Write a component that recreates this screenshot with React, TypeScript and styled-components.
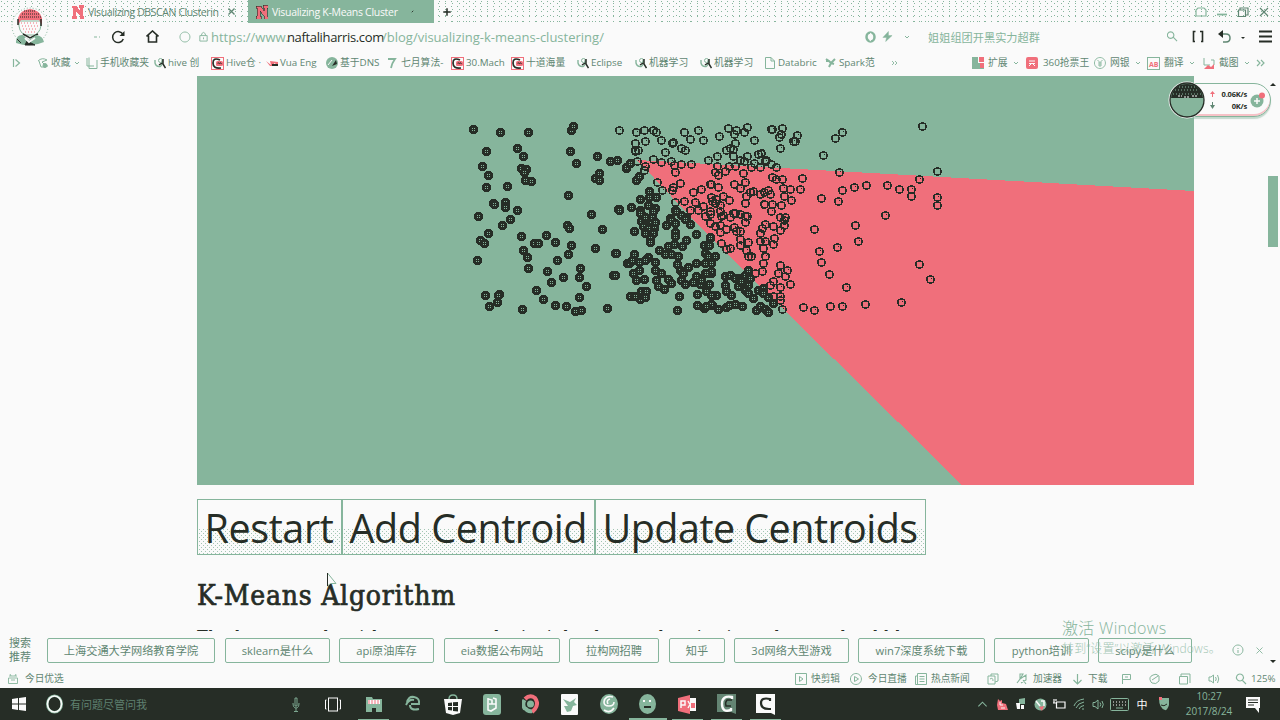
import React from 'react';
import styled, { createGlobalStyle, css } from 'styled-components';

const paper = '#fafafa';
const green = '#86b59c';
const red = '#f06f7b';
const ink = '#262d26';
const mid = '#5f8672';

const ui = `"Open Sans", "Noto Sans CJK SC", sans-serif`;

const Global = createGlobalStyle`
  * { box-sizing: border-box; }
  html, body { margin: 0; background: ${paper}; overflow: hidden; }
  body { font-family: ${ui}; color: ${ink}; }
  svg { display: block; flex: none; }
`;

const stipple = css`
  background-image:
    linear-gradient(${green}, ${green}), radial-gradient(circle at 1.5px 1.5px, ${green} 0.7px, transparent 0.8px),
    radial-gradient(circle at 4.5px 3.5px, ${green} 0.7px, transparent 0.8px);
  background-size: 0 0, 6px 5px, 7px 6px;
`;

const Screen = styled.div`
  position: relative;
  width: 1280px;
  height: 720px;
  display: flex;
  flex-direction: column;
  overflow: hidden;
  background: ${paper};
`;

const TabBar = styled.div`
  height: 23px;
  flex: none;
  display: flex;
  padding-left: 64px;
  ${stipple}
`;

const Tab = styled.div<{ $active?: boolean; $width: number }>`
  width: ${p => p.$width}px;
  height: 23px;
  display: flex;
  align-items: center;
  padding: 0 8px;
  background: ${p => (p.$active ? green : 'transparent')};
  color: ${p => (p.$active ? paper : mid)};
  font-size: 10.5px;
`;

const TabTitle = styled.span<{ $spacing: number; $width: number }>`
  margin-left: 4px;
  width: ${p => p.$width}px;
  white-space: nowrap;
  letter-spacing: ${p => p.$spacing}px;
`;

const TabTools = styled.div`
  display: flex;
  align-items: center;
  margin-left: auto;
  gap: 9px;
  padding-right: 10px;
`;

const NewTab = styled.div`
  display: flex;
  align-items: center;
  padding-left: 8px;
`;

const AddressBar = styled.div`
  height: 27px;
  flex: none;
  display: flex;
  align-items: center;
`;

const Slot = styled.div<{ $width: number; $align?: string }>`
  width: ${p => p.$width}px;
  flex: none;
  display: flex;
  align-items: center;
  justify-content: ${p => p.$align || 'center'};
`;

const UrlPart = styled.span<{ $width: number; $dark?: boolean; $spacing?: number }>`
  width: ${p => p.$width}px;
  flex: none;
  white-space: nowrap;
  font-size: 13px;
  line-height: 22px;
  letter-spacing: ${p => p.$spacing || 0}px;
  color: ${p => (p.$dark ? ink : green)};
`;

const Query = styled.span`
  width: 237px;
  font-size: 11.2px;
  color: ${green};
`;

const BookmarkBar = styled.div`
  height: 26px;
  flex: none;
  display: flex;
  align-items: center;
  padding-left: 10px;
`;

const Bookmark = styled.div<{ $width: number; $gap?: number }>`
  width: ${p => p.$width}px;
  flex: none;
  display: flex;
  align-items: center;
  gap: ${p => p.$gap ?? 2}px;
  font-size: 9.8px;
  line-height: 14px;
  color: ${mid};
  white-space: nowrap;
`;

const Page = styled.main`
  height: 555px;
  flex: none;
  display: flex;
  justify-content: space-between;
  padding-left: 197px;
  overflow: hidden;
`;

const Article = styled.article`
  width: 997px;
`;

const Controls = styled.div`
  display: flex;
  margin-top: 14px;
`;

const ControlButton = styled.button<{ $width: number; $spacing: number }>`
  position: relative;
  width: ${p => p.$width}px;
  height: 56px;
  margin: 0;
  padding: 1px 0 0 6.500px;
  text-align: left;
  border: 1px solid ${green};
  background: ${paper};
  font: 39.500px/54px "Open Sans", sans-serif;
  letter-spacing: ${p => p.$spacing}px;
  white-space: nowrap;
  color: ${ink};
  &::before {
    content: '';
    position: absolute;
    inset: 28px 0 0 0;
    opacity: 0.75;
    background-image: radial-gradient(circle at 1.5px 1.5px, ${green} 0.7px, transparent 0.8px),
      radial-gradient(circle at 3.5px 3.5px, ${green} 0.7px, transparent 0.8px);
    background-size: 4px 4px;
  }
`;

const ButtonLabel = styled.span`
  position: relative;
`;

const Heading = styled.h2`
  margin: 21px 0 0;
  font: 28px/40px "DejaVu Serif Condensed", "DejaVu Serif", serif;
  font-stretch: condensed;
  letter-spacing: 0.75px;
  white-space: nowrap;
  -webkit-text-stroke: 0.7px ${ink};
`;

const Paragraph = styled.p`
  margin: 8px 0 0;
  font: 18px/28px "DejaVu Serif Condensed", "DejaVu Serif", serif;
  font-stretch: condensed;
  letter-spacing: 0.6px;
  white-space: nowrap;
`;

const ScrollTrack = styled.div`
  width: 14px;
  display: flex;
  flex-direction: column;
  align-items: center;
  padding-top: 5px;
`;

const ScrollThumb = styled.div`
  width: 10px;
  height: 71px;
  margin-top: 87px;
  background: ${green};
`;

const Suggest = styled.div`
  height: 38px;
  flex: none;
  display: flex;
  align-items: center;
  padding-left: 9px;
`;

const SuggestTitle = styled.div`
  width: 38px;
  font-size: 11px;
  line-height: 14px;
  color: ${mid};
`;

const Chip = styled.div<{ $width: number; $gap: number }>`
  width: ${p => p.$width}px;
  height: 25px;
  margin-right: ${p => p.$gap}px;
  flex: none;
  border: 1px solid ${green};
  border-radius: 2px;
  text-align: center;
  white-space: nowrap;
  font-size: 11.2px;
  line-height: 23px;
  color: ${mid};
`;

const SuggestTools = styled.div`
  align-self: stretch;
  display: flex;
  align-items: center;
`;

const ScrollEnd = styled.div`
  align-self: flex-end;
  margin-bottom: 3px;
`;

const StatusBar = styled.div`
  height: 19px;
  flex: none;
  display: flex;
  align-items: center;
  font-size: 9.7px;
  line-height: 14px;
  color: ${mid};
  white-space: nowrap;
  padding-left: 7px;
`;

const TaskBar = styled.footer`
  height: 32px;
  flex: none;
  display: flex;
  align-items: stretch;
  background: ${ink};
`;

const TaskSlot = styled.div<{ $width: number; $open?: boolean; $active?: boolean }>`
  width: ${p => p.$width}px;
  flex: none;
  display: flex;
  align-items: center;
  justify-content: center;
  background: linear-gradient(${green}, ${green}) center bottom / ${p => (p.$active ? '38px 2px' : p.$open ? '31px 1px' : '0 0')} no-repeat;
`;

const TaskQuery = styled.div`
  width: 213px;
  align-self: center;
  font-size: 11px;
  color: #5f8070;
`;

const Ime = styled.span`
  font-size: 11px;
  color: ${paper};
`;

const Clock = styled.div`
  width: 68px;
  text-align: center;
  font-size: 10px;
  line-height: 15px;
  color: ${green};
  padding-top: 1px;
  letter-spacing: -0.1px;
`;

const Avatar = styled.div`
  position: absolute;
  left: 11px;
  top: 7px;
`;

const Watermark = styled.div`
  position: absolute;
  left: 1062px;
  top: 618px;
  color: ${green};
  font-weight: 300;
  white-space: nowrap;
  font-size: 16px;
  letter-spacing: 0.3px;
  line-height: 21px;
`;

const WatermarkSmall = styled.div`
  font-size: 12px;
  letter-spacing: 0.2px;
  line-height: 16px;
  margin-top: 2px;
  opacity: 0.75;
`;

const NetWidget = styled.div`
  position: absolute;
  left: 1168px;
  top: 80px;
  display: flex;
  align-items: center;
`;

const NetPill = styled.div`
  width: 83px;
  height: 34px;
  margin-left: -18px;
  padding: 0 5px 0 21px;
  display: flex;
  align-items: center;
  justify-content: space-between;
  border: 1px solid ${green};
  border-radius: 0 17px 17px 0;
  box-shadow: inset 0 -2px 0 ${red}66, 0 2px 1px ${green}77;
  background: ${paper};
`;

const NetBall = styled.div`
  position: relative;
  z-index: 1;
`;

const NetText = styled.div`
  width: 33px;
  padding-right: 2px;
  text-align: right;
  font: bold 7.5px/12px "Open Sans", sans-serif;
  letter-spacing: -0.2px;
`;

const Cursor = styled.div`
  position: absolute;
  left: 326px;
  top: 572px;
`;

type IconProps = { d: string; size?: number; color?: string; fill?: string; w?: number; box?: number };
const Icon = ({ d, size = 12, color = green, fill = 'none', w = 1.2, box = 12 }: IconProps) => (
  <svg width={size} height={size} viewBox={`0 0 ${box} ${box}`} fill={fill} stroke={color} strokeWidth={w}>
    <path d={d} />
  </svg>
);

const Chevron = ({ color = green }) => <Icon d="M2 3 L4 5 L6 3" size={8} box={8} color={color} w={1} />;

const SiteN = () => (
  <svg width="12" height="14" viewBox="0 0 12 14" shapeRendering="crispEdges">
    <path d="M0 1H5L8 6V3H7V0H12V3H11V11H12V14H8V11L4 6V11H5V14H0V11H1V3H0Z" fill={red} />
  </svg>
);

const SiteNOutlined = () => (
  <svg width="12" height="14" viewBox="0 0 12 14" shapeRendering="crispEdges">
    <path d="M0 1H5L8 6V3H7V0H12V3H11V11H12V14H8V11L4 6V11H5V14H0V11H1V3H0Z" fill={red} stroke={ink} strokeWidth=".6" />
  </svg>
);

const Swirl = () => (
  <svg width="12" height="12" viewBox="0 0 12 12" fill="none">
    <path d="M1 3V6Q2 10 6 9.500Q9 8 8 3" stroke={green} strokeWidth="1.4" />
    <circle cx="6.500" cy="3.500" r="2" stroke={green} />
    <path d="M9 2V7L11.500 11M5 8L8 6" stroke={ink} strokeWidth="1.5" />
  </svg>
);

const RedC = () => (
  <svg width="13" height="13" viewBox="0 0 13 13" fill="none">
    <rect x=".5" y=".5" width="12" height="12" stroke={red} />
    <path d="M9 3Q2 0 2 6T10 11" stroke={ink} strokeWidth="1.7" />
    <rect x="5" y="4" width="7" height="5" rx="1.5" fill={red} />
    <path d="M7 7V5.5L9 7V5.5L11 7" stroke={ink} strokeWidth=".7" />
  </svg>
);

const glyphs: Record<string, React.ReactNode> = {
  star: (
    <svg width="12" height="12" viewBox="0 0 12 12" fill="none" stroke={green}>
      <path d="M1 4Q5 0 10 3L5 5L9 9H11M2 4L4 10H8" />
      <circle cx="8" cy="8.500" r="2" fill={green} />
    </svg>
  ),
  phone: <Icon d="M3 .5V11.500H11V3M1 1V9H8" w={1} />,
  swirl: <Swirl />,
  redc: <RedC />,
  vue: (
    <svg width="12" height="12" viewBox="0 0 12 12">
      <path d="M0 4L5 8L4 4L12 5V8L8 6V9H4Z" fill={red} />
      <path d="M6 7H12V9H6Z" fill={ink} />
    </svg>
  ),
  dns: (
    <svg width="12" height="12" viewBox="0 0 12 12">
      <circle cx="6" cy="6" r="6" fill={green} />
      <path d="M6 9L10 3L11 7Z" fill={ink} />
      <path d="M2 8L6 3" stroke={paper} />
    </svg>
  ),
  seven: <Icon d="M1 2H8Q5 6 4 11" w={1.800} />,
  page: <Icon d="M1.500 .5H7L10.500 4V11.500H1.500ZM7 .5V4H10.500" w={1} />,
  spark: <Icon d="M1 2L4 4L6 6L10 2M6 6L4 10M6 6L9 7M1 4L4 4" w={2} />,
};

const bookmarks: [string, string, number][] = [
  ['phone', '手机收藏夹', 68],
  ['swirl', 'hive 创', 57],
  ['redc', 'Hive仓 ·', 55],
  ['vue', 'Vua Eng', 60],
  ['dns', '基于DNS', 61],
  ['seven', '七月算法-', 64],
  ['redc', '30.Mach', 60],
  ['redc', '十道海量', 66],
  ['swirl', 'Eclipse', 58],
  ['swirl', '机器学习', 65],
  ['swirl', '机器学习', 64],
  ['page', 'Databric', 61],
  ['spark', 'Spark范', 65],
];

type Tile = { x: number; y: number; solid?: string; open?: string };

// Sample positions, grouped by tile; offsets inside a tile are in thirds of a pixel.
const tiles: Tile[] = [
  {
    x: 460, y: 110,
    solid: '40,57 120,67 204,67 333,60 341,50 173,115 189,138 78,124 67,168 86,196 80,232 142,230 183,174 198,178 193,188 196,212 213,215 332,125 349,161 413,138 451,155 471,150 499,174 418,190 405,204 419,212 326,257 100,281 104,284 137,278 137,291 171,301 55,319 152,327 128,346 84,370 62,391 74,400 53,450 183,378 223,401 236,400 259,375 287,397 321,347 329,355 394,313 427,358 406,416 333,407 326,432 467,430 475,299 191,421 203,443 204,475 291,451 262,484 273,517 309,501 360,475 357,501 379,530 460,497 503,461 228,542 250,567 285,586 320,589 345,603 363,600 358,563 441,596 188,598 77,555 118,552 115,556 113,577 89,589',
    open: '479,60',
  },
  {
    x: 615, y: 110,
    solid: '7,150 35,173 65,210 72,200 47,160 103,245 124,262 103,262 77,267 12,298 48,293 75,302 100,285 85,320 120,294 112,322 165,325 182,300 200,315 215,322',
    open: '64,68 87,60 115,60 124,68 92,93 61,101 138,91 115,147 152,128 207,66 250,62 225,88 265,90 175,97 173,99 200,115 210,122 140,158 168,155 178,165 182,188 198,162 230,162 195,220 172,240 174,232 90,168 88,180 66,153 128,217 142,240 180,278 209,273 235,247 260,238 290,222 240,278 265,290 250,300 292,275 225,300 270,318 60,124 70,120 62,120',
  },
  {
    x: 705, y: 110,
    open: '42,80 70,54 88,72 95,62 118,68 127,53 148,92 198,57 201,59 233,54 228,72 224,83 225,115 277,75 266,94 90,100 75,115 65,120 85,118 85,138 38,138 128,138 160,132 170,130 105,150 118,155 148,160 185,150 180,155 198,162 215,172 140,172 165,172 38,168 72,170 90,168 60,185 40,195 30,188 115,190 15,222 40,232 120,218 88,224 105,234 203,203 215,207 232,208 285,238 255,237 236,235 238,258 260,272 230,286 203,282 178,282 200,305 225,322 125,258 135,248 145,244 165,254 178,246 190,240 197,252 120,280 18,262 35,268 55,260 72,270 45,285 30,280 45,305 15,305 50,320 90,310 105,312 122,318 75,322 240,322 10,150',
  },
  {
    x: 615, y: 210,
    solid: '12,0 75,10 115,5 80,35 95,30 110,40 122,38 85,50 100,55 118,55 90,70 115,70 105,85 105,97 90,22 57,63 153,47 168,30 180,40 185,5 200,15 212,28 225,42 180,68 180,80 245,73 213,92 203,110 178,103 160,108 133,120 150,132 168,132 190,140 286,85 268,105 5,130 57,132 42,160 52,150 72,158 100,142 90,152 120,158 55,190 72,182 65,212 88,207 120,182 138,190 125,212 130,230 148,238 160,208 168,220 187,162 195,180 205,190 220,172 200,210 212,222 235,218 244,160 245,198 255,222 270,130 280,145 270,160 290,160 270,190 290,190 260,212 282,222 2,197 46,260 80,245 95,245 75,268 90,262 60,260 193,260 188,300 248,252 248,286 268,294 292,285 275,245',
  },
  {
    x: 705, y: 210,
    solid: '17,82 12,105 10,140 32,140 0,160 20,185 5,190 60,198 75,195 90,205 60,225 65,245 78,255 100,230 105,205 120,195 130,182 135,205 110,215 130,225 120,240 130,250 145,265 160,240 175,235 175,250 190,262 205,280 113,288 90,282 65,293 72,285 40,297 20,282 5,290 35,257 18,255 155,300 165,290 180,298 190,308',
    open: '15,12 15,40 30,48 45,45 45,67 65,57 88,52 95,65 105,65 75,22 55,15 85,10 105,12 128,18 122,38 225,22 238,30 238,45 225,60 205,48 180,42 172,55 165,70 165,95 182,95 207,85 205,103 175,115 180,138 175,160 172,185 150,190 130,97 105,88 105,105 48,100 75,115 65,118 125,120 130,140 140,138 225,167 247,180 240,200 220,190 205,215 225,232 255,222 195,225 205,258 225,258 225,272 232,297',
  },
  {
    x: 795, y: 110,
    open: '7,76 2,95 141,66 120,85 86,137 382,49 132,187 22,206 15,238 142,241 178,232 213,226 276,226 314,238 350,238 350,259 374,209 427,185 428,261 427,287 130,275 78,264 271,317 181,345 191,394 57,359 74,425 79,456 126,411 104,492 155,532 374,462 405,509 25,593 58,600 106,590 143,590 210,583 319,577',
  },
];

const place = (t: Tile, list = '') =>
  list.split(' ').filter(Boolean).map(pair => {
    const [x, y] = pair.split(',').map(Number);
    return [Math.floor(t.x + x / 3), Math.floor(t.y + y / 3)];
  });

const Plot = () => (
  <svg width="997" height="409" viewBox="197 76 997 409" shapeRendering="crispEdges">
    <rect x="197" y="76" width="997" height="409" fill={green} />
    <path d="M637 160L1194 191V485H962L705 232Z" fill={red} />
    {tiles.map((t, i) => (
      <g key={i}>
        {place(t, t.solid).map(([x, y], k) => (
          <g key={k}>
            <circle cx={x + 0.5} cy={y + 0.5} r="4.6" fill={ink} />
            <path d={`M${x - 1} ${y - 1}h1v1h-1zM${x + 1} ${y - 1}h1v1h-1zM${x - 1} ${y + 1}h1v1h-1zM${x + 1} ${y + 1}h1v1h-1z`} fill={green} />
          </g>
        ))}
        {place(t, t.open).map(([x, y], k) => (
          <g key={k}>
            <circle cx={x + 0.5} cy={y + 0.5} r="3.600" fill="none" stroke={ink} strokeWidth="1.800" />
            {k % 2 === 0 && <rect x={x + 1} y={y - 1} width="1" height="1" fill={ink} />}
          </g>
        ))}
      </g>
    ))}
  </svg>
);

const chips: [string, number, number][] = [
  ['上海交通大学网络教育学院', 168, 10],
  ['sklearn是什么', 105, 9],
  ['api原油库存', 95, 10],
  ['eia数据公布网站', 116, 9],
  ['拉构网招聘', 90, 10],
  ['知乎', 56, 9],
  ['3d网络大型游戏', 115, 9],
  ['win7深度系统下载', 127, 9],
  ['python培训', 95, 9],
  ['scipy是什么', 94, 40],
];

const Tray = () => (
  <>
    <TaskSlot $width={20}><Icon d="M1.500 8L6 3.500L10.500 8" color={green} size={11} /></TaskSlot>
    <TaskSlot $width={19}>
      <svg width="12" height="13" viewBox="0 0 12 13"><path d="M2 1L4 3L6 2V5L10 6L12 12H2L1 7Z" fill={red} /><path d="M4 4V7H7M5 10H9" stroke={paper} fill="none" /></svg>
    </TaskSlot>
    <TaskSlot $width={19}>
      <svg width="12" height="12" viewBox="0 0 12 12"><path d="M4 1L10 0V6H4Z" fill={green} /><path d="M1 5H5V11H2ZM6 7H9V11H6Z" fill={paper} /></svg>
    </TaskSlot>
    <TaskSlot $width={20}>
      <svg width="13" height="13" viewBox="0 0 13 13"><circle cx="6.500" cy="6.500" r="6" fill={green} /><path d="M2 3L6 8M7 3H10V8" stroke={paper} fill="none" strokeWidth="1.5" /><path d="M5 9L10 8L8 13Z" fill={red} /></svg>
    </TaskSlot>
    <TaskSlot $width={19}><Icon d="M3.500 4H12V10H3.500ZM1 1V5M3 1V3M0 5H3" color={paper} size={13} box={13} /></TaskSlot>
    <TaskSlot $width={20}><Icon d="M1 8Q3 2 11 1M3 10Q5 5 11 4M6 11Q7 8 11 7.500M9 11H11" w={1} /></TaskSlot>
    <TaskSlot $width={19}><Icon d="M1 4.500H3L6 2V11L3 8.500H1ZM8 4.500Q9.500 6.500 8 8.500M10 3Q12.500 6.500 10 10" size={13} box={13} w={1} /></TaskSlot>
    <TaskSlot $width={23}>
      <svg width="19" height="13" viewBox="0 0 19 13" fill="none" stroke={green}><rect x=".5" y=".5" width="18" height="12" rx="1" /><path d="M3 4H16M3 7H16" strokeDasharray="1 2" stroke={paper} /><path d="M6 10H13" /></svg>
    </TaskSlot>
    <TaskSlot $width={22}><Ime>中</Ime></TaskSlot>
    <TaskSlot $width={22}>
      <svg width="10" height="14" viewBox="0 0 10 14"><path d="M0 1H10V8Q8 14 6 13Q0 11 0 1Z" fill={green} /><path d="M0 0H3V3H0Z" fill={red} /><path d="M2 8Q5 10 8 7" stroke={ink} fill="none" /></svg>
    </TaskSlot>
  </>
);

export default function App() {
  return (
    <Screen>
      <Global />
      <TabBar>
        <Tab $width={184}>
          <SiteN />
          <TabTitle $spacing={-0.4} $width={142}>Visualizing DBSCAN Clusterin</TabTitle>
          <Slot $width={18}><Icon d="M2 2L10 10M10 2L2 10" size={9} w={1.800} color={mid} /></Slot>
        </Tab>
        <Tab $active $width={186}>
          <SiteNOutlined />
          <TabTitle $spacing={-0.3} $width={138}>Visualizing K-Means Cluster</TabTitle>
          <Slot $width={28}><Icon d="M5 7L7 5" size={9} color={ink} /></Slot>
        </Tab>
        <NewTab><Icon d="M6 1.500V10.500M1.500 6H10.500" size={10} color={ink} w={1.800} /></NewTab>
        <TabTools>
          <Icon d="M3 2H9L11 4V10H1V4Z" />
          <Icon d="M1 8.500H11" w={1.800} />
          <Icon d="M1.500 4H8.500V10.500H1.500ZM3 4V2H11V9H9" color={mid} />
          <Icon d="M2 2L10 10M10 2L2 10" color={mid} />
        </TabTools>
      </TabBar>

      <AddressBar>
        <Slot $width={103} $align="flex-end"><Icon d="M3 6H6M8 6H9" /></Slot>
        <Slot $width={30}>
          <svg width="14" height="14" viewBox="0 0 14 14" fill="none"><path d="M12 4.500A5.500 5.500 0 1 0 12.300 9" stroke={ink} strokeWidth="1.5" /><path d="M13.500 1V6H8.500Z" fill={ink} /></svg>
        </Slot>
        <Slot $width={38}><Icon d="M.5 6.500L6.500 1L12.500 6.500M2.500 5.500V12H10.500V5.500" size={13} box={13} color={ink} w={1.600} /></Slot>
        <Slot $width={28}><Icon d="M6 1A5 5 0 1 1 5.900 1Z" w={0.900} /></Slot>
        <Slot $width={8}><Icon d="M2 5H10V11H2ZM4 5V3Q6 0 8 3V5M6 7V9" size={11} w={1} /></Slot>
        <Slot $width={4} />
        <UrlPart $width={76}>https://www.</UrlPart>
        <UrlPart $width={95} $dark $spacing={-0.35}>naftaliharris.com</UrlPart>
        <UrlPart $width={481}>/blog/visualizing-k-means-clustering/</UrlPart>
        <Slot $width={14}>
          <svg width="11" height="12" viewBox="0 0 11 12"><ellipse cx="5.500" cy="6" rx="4" ry="4.500" fill="none" stroke={green} strokeWidth="2.5" /><path d="M6 2L4 6H7L5 10" stroke={paper} fill="none" strokeWidth="1.2" /></svg>
        </Slot>
        <Slot $width={20}><Icon d="M7 .5L1 7H5L4 11.500L11 5H7Z" fill={green} w={0.5} size={11} /></Slot>
        <Slot $width={31} $align="flex-start"><Slot $width={20}><Chevron /></Slot></Slot>
        <Query>姐姐组团开黑实力超群</Query>
        <Slot $width={14}><Icon d="M4 1A3.500 3.500 0 1 1 3.900 1ZM7 7L11 11" size={11} /></Slot>
        <Slot $width={39}><Icon d="M3.500 1.500H1.500V11.500H3M8 1.500H10.500V11.500H9" size={13} box={13} color={ink} w={1.600} /></Slot>
        <Slot $width={13}>
          <svg width="13" height="13" viewBox="0 0 13 13" fill="none"><path d="M2 4H8Q12 4 12 8T8 12H5" stroke={mid} strokeWidth="1.5" /><path d="M5 0V8L0 4Z" fill={ink} /></svg>
        </Slot>
        <Slot $width={21}><Icon d="M3 4H7L5 6Z" size={8} box={8} fill={ink} color={ink} w={0} /></Slot>
        <Slot $width={27}><Icon d="M0 1.500H13M0 6.500H13M0 11.500H13" size={13} box={13} color={ink} w={1.800} /></Slot>
      </AddressBar>

      <BookmarkBar>
        <Bookmark $width={27}><Icon d="M3.500 2V10M5.500 2.500L9.500 6L5.500 9.500" /></Bookmark>
        <Bookmark $width={49}>{glyphs.star}<span>收藏</span><Chevron /></Bookmark>
        {bookmarks.map(([g, label, w], i) => (
          <Bookmark key={i} $width={w}>{glyphs[g]}<span>{label}</span></Bookmark>
        ))}
        <Bookmark $width={82}><Icon d="M2 4L4 6L2 8M5 4L7 6L5 8" w={0.900} /></Bookmark>
        <Bookmark $width={54} $gap={4}>
          <svg width="12" height="12" viewBox="0 0 12 12"><path d="M0 0H6V6H12V12H0Z" fill={green} /><path d="M7 0H12V5H7ZM8 6H12V11H8Z" fill={red} /></svg>
          <span>扩展</span><Chevron />
        </Bookmark>
        <Bookmark $width={68} $gap={5}>
          <svg width="12" height="12" viewBox="0 0 12 12"><rect width="12" height="12" rx="2" fill={red} /><path d="M3 4H9M3 6.500H9M3 9L5 7M9 9L7 7" stroke={paper} fill="none" /></svg>
          <span>360抢票王</span>
        </Bookmark>
        <Bookmark $width={53} $gap={4}>
          <Icon d="M6 .5A5.500 5.500 0 1 1 5.900 .5ZM3.500 3L6 5.500L8.500 3M6 5.500V10M4 6H8M4 8H8" w={0.900} />
          <span>网银</span><Chevron />
        </Bookmark>
        <Bookmark $width={56} $gap={4}>
          <svg width="13" height="13" viewBox="0 0 13 13" fill="none"><rect x=".5" y=".5" width="12" height="12" stroke={green} /><text x="2" y="9.500" fontSize="7" fontWeight="bold" fill={red}>AB</text></svg>
          <span>翻译</span><Chevron />
        </Bookmark>
        <Bookmark $width={52} $gap={4}>
          <svg width="12" height="12" viewBox="0 0 12 12" fill="none"><path d="M1 1V8H7M8 3H11V8" stroke={green} /><path d="M1 12L5 8L8 10L11 7V12Z" fill={red} /></svg>
          <span>截图</span><Chevron />
        </Bookmark>
        <Bookmark $width={16}><Icon d="M2 3L5 6L2 9M6 3L9 6L6 9" /></Bookmark>
      </BookmarkBar>

      <Page>
        <Article>
          <Plot />
          <Controls>
            <ControlButton $width={145} $spacing={-0.4}><ButtonLabel>Restart</ButtonLabel></ControlButton>
            <ControlButton $width={253} $spacing={-0.45}><ButtonLabel>Add Centroid</ButtonLabel></ControlButton>
            <ControlButton $width={331} $spacing={-0.55}><ButtonLabel>Update Centroids</ButtonLabel></ControlButton>
          </Controls>
          <Heading>K-Means Algorithm</Heading>
          <Paragraph>The k-means algorithm captures the insight that each point in a cluster should be near to</Paragraph>
        </Article>
        <ScrollTrack>
          <Icon d="M1 5L4 2L7 5Z" size={8} box={8} fill={ink} color={ink} w={0} />
          <ScrollThumb />
        </ScrollTrack>
      </Page>

      <Suggest>
        <SuggestTitle>搜索<br />推荐</SuggestTitle>
        {chips.map(([label, w, gap]) => (
          <Chip key={label} $width={w} $gap={gap}>{label}</Chip>
        ))}
        <SuggestTools>
          <Slot $width={18} $align="flex-start"><Icon d="M6 1A5 5 0 1 1 5.900 1ZM6 4V5M6 6V9" w={1} /></Slot>
          <Slot $width={19}><Icon d="M2 2L10 10M10 2L2 10" size={9} w={1.200} /></Slot>
          <ScrollEnd><Icon d="M1 2L4 5L7 2Z" size={8} box={8} fill={ink} color={ink} w={0} /></ScrollEnd>
        </SuggestTools>
      </Suggest>

      <StatusBar>
        <Slot $width={18} $align="flex-start"><Icon d="M2 3H10M3 1L4 3M9 1L8 3M1.500 5H10.500V10.500H1.500ZM4 7H8" w={0.900} /></Slot>
        <Slot $width={770} $align="flex-start">今日优选</Slot>
        <Slot $width={16} $align="flex-start"><Icon d="M.5 .5H11.500V11.500H.5ZM4.500 3.500V8.500L8 6Z" w={1} /></Slot>
        <Slot $width={39} $align="flex-start">快剪辑</Slot>
        <Slot $width={18} $align="flex-start"><Icon d="M6 .5A5.500 5.500 0 1 1 5.900 .5ZM4.500 3.500V8.500L8.500 6Z" w={1} /></Slot>
        <Slot $width={47} $align="flex-start">今日直播</Slot>
        <Slot $width={16} $align="flex-start"><Icon d="M2.500 .5H11.500V11.500H.5V3H2.500ZM4.500 3.500H9.500M4.500 6H9.500M4.500 8.500H9.500M2.500 3V11" w={1} /></Slot>
        <Slot $width={56} $align="flex-start">热点新闻</Slot>
        <Slot $width={29} $align="flex-start"><Icon d="M1 3H8V11H1ZM4 3V1H11V8L8 9M3 6Q6 4 6 8" w={1} /></Slot>
        <Slot $width={17} $align="flex-start"><Icon d="M1 10L4 6V1H7L4 6L10 2V7L5 10M7 7L10 11" w={1.100} /></Slot>
        <Slot $width={39} $align="flex-start">加速器</Slot>
        <Slot $width={16} $align="flex-start"><Icon d="M5.500 1V11M1.500 7L5.500 11L9.500 7" /></Slot>
        <Slot $width={33} $align="flex-start">下载</Slot>
        <Slot $width={28} $align="flex-start"><Icon d="M1.500 11V1.500H9.500V6.500H2M4 4H7" w={1} /></Slot>
        <Slot $width={30} $align="flex-start"><Icon d="M2 9Q-1 4 4 2Q7 0 10 3V8Q7 12 3 10ZM3 7L9 3" w={1} /></Slot>
        <Slot $width={29} $align="flex-start"><Icon d="M.5 3.500H8.500V11H.5ZM2 3V1H11V10" w={1} /></Slot>
        <Slot $width={27} $align="flex-start"><Icon d="M1 4H3L5.500 2V10L3 8H1ZM7.500 4Q9 6 7.500 8M9.500 2Q12 6 9.500 10" w={1} /></Slot>
        <Slot $width={16} $align="flex-start"><Icon d="M5 1A3.500 3.500 0 1 1 4.900 1ZM7.500 7.500L11 11" w={1.100} /></Slot>
        <span>125%</span>
      </StatusBar>

      <TaskBar>
        <TaskSlot $width={38}>
          <svg width="14" height="14" viewBox="0 0 14 14"><path d="M0 2L6 1V6.500H0ZM7 1L14 0V6.500H7ZM0 7.500H6V13L0 12ZM7 7.500H14V14L7 13Z" fill={paper} /></svg>
        </TaskSlot>
        <TaskSlot $width={32}>
          <svg width="17" height="20" viewBox="0 0 17 20" fill="none"><ellipse cx="8.500" cy="10" rx="7.300" ry="8.300" stroke={green} strokeWidth="2.400" /><ellipse cx="8.500" cy="10" rx="7" ry="8" stroke={paper} strokeWidth="1.6" /></svg>
        </TaskSlot>
        <TaskQuery>有问题尽管问我</TaskQuery>
        <TaskSlot $width={28}><Icon d="M5 1H7V9H5ZM3 6Q3 11 6 11T9 6M6 11V14M4 14.500H8" size={15} box={15} w={0.900} /></TaskSlot>
        <TaskSlot $width={43}>
          <svg width="16" height="15" viewBox="0 0 16 15" fill="none" stroke={paper}><rect x="3.500" y="1" width="9" height="13" /><path d="M1.500 3H.5V12H1.500M14.500 3H15.500V12H14.500" /></svg>
        </TaskSlot>
        <TaskSlot $width={39} $open>
          <svg width="18" height="17" viewBox="0 0 18 17"><path d="M1 1H7L8 3H17V16H1Z" fill={green} /><path d="M3 4H15V8H3Z" fill={paper} /><path d="M3 5H15M3 7H15" stroke={red} strokeDasharray="2 1" /><path d="M7 16V12H11V16Z" fill={ink} /></svg>
        </TaskSlot>
        <TaskSlot $width={40}>
          <svg width="16" height="20" viewBox="0 0 16 20" fill="none"><path d="M2 9Q3 2 9 3T14 10H6M1 11Q4 5 9 6M5 11Q5 17 14 15" stroke={green} strokeWidth="2" /></svg>
        </TaskSlot>
        <TaskSlot $width={39}>
          <svg width="18" height="21" viewBox="0 0 18 21"><path d="M5 5Q5 1 9 1T13 5" stroke={green} fill="none" strokeWidth="1.4" /><path d="M0 5H18L16 19L9 21L2 19Z" fill={paper} /><path d="M4 9L8 8.500V12H4ZM9 8.300L14 8V12H9ZM4 13H8V16.500L4 16ZM9 13H14V17.500L9 17Z" fill={ink} /></svg>
        </TaskSlot>
        <TaskSlot $width={39}>
          <svg width="18" height="21" viewBox="0 0 18 21" fill="none"><rect width="18" height="21" rx="3" fill={green} /><path d="M5 4V16L8 17L13 14V10H6M5 5L9 6V10L13 10V5L10 4" stroke={paper} strokeWidth="1.6" /></svg>
        </TaskSlot>
        <TaskSlot $width={39}>
          <svg width="17" height="20" viewBox="0 0 17 20" fill="none" strokeWidth="4"><path d="M3 15A6.500 7.500 0 0 1 2.500 6" stroke={green} /><path d="M3 5Q8 0 13 4Q17 9 13 15L10 18" stroke={red} /><path d="M3 14Q6 18 10 17" stroke={green} /><circle cx="8.500" cy="10" r="3.500" fill={green} /></svg>
        </TaskSlot>
        <TaskSlot $width={39}>
          <svg width="17" height="21" viewBox="0 0 17 21"><rect width="17" height="21" rx="1" fill={paper} /><path d="M2 5L9 8L15 4L13 8L16 11L12 12L10 17L6 18L3 12L7 12Z" fill={green} /></svg>
        </TaskSlot>
        <TaskSlot $width={39}>
          <svg width="18" height="20" viewBox="0 0 18 20" fill="none"><ellipse cx="9" cy="10" rx="9" ry="10" fill={green} /><path d="M13 3Q5 1 4 8Q4 12 9 12T14 8M4 16Q10 20 14 14M10 5Q6 6 8 10" stroke={paper} strokeWidth="1.600" /></svg>
        </TaskSlot>
        <TaskSlot $width={39} $active>
          <svg width="17" height="20" viewBox="0 0 17 20" fill="none"><ellipse cx="8.500" cy="10" rx="8.500" ry="10" fill={green} /><path d="M5 6V8M11 6V8" stroke={paper} strokeWidth="2" /><path d="M5 13H12" stroke={ink} strokeWidth="2" /></svg>
        </TaskSlot>
        <TaskSlot $width={40} $open>
          <svg width="18" height="19" viewBox="0 0 18 19" fill="none"><path d="M0 3L12 0V19L0 16Z" fill={red} /><path d="M12 3H18V16H12Z" fill={paper} /><path d="M3 13V6H7V10H3M10 6L14 13M14 6L10 13" stroke={paper} strokeWidth="1.500" /><path d="M13 8H17V13H13Z" fill={red} /></svg>
        </TaskSlot>
        <TaskSlot $width={39} $open>
          <svg width="19" height="20" viewBox="0 0 19 20" fill="none"><path d="M0 0H19V20L14 18H0Z" fill={green} opacity=".65" /><path d="M15 5V3Q5 1 5 10T14 16V14" stroke={paper} strokeWidth="2.400" /><path d="M15 6H10Q8 8 9 12H14" stroke={ink} strokeWidth="1.500" /></svg>
        </TaskSlot>
        <TaskSlot $width={39} $open>
          <svg width="19" height="21" viewBox="0 0 19 21" fill="none"><path d="M0 0H19V21L15 19H0Z" fill={paper} /><path d="M14 7V5Q5 3 5 9T13 15H15" stroke={ink} strokeWidth="2.200" /></svg>
        </TaskSlot>
        <TaskSlot $width={187} />
        <Tray />
        <Clock>10:27<br />2017/8/24</Clock>
        <TaskSlot $width={20}>
          <svg width="15" height="17" viewBox="0 0 15 17"><path d="M0 1H14V12H13V17L9 12H0Z" fill={paper} /><path d="M2 4H12M2 6.500H12M2 9H8" stroke={ink} /></svg>
        </TaskSlot>
      </TaskBar>

      <Avatar>
        <svg width="38" height="40" viewBox="0 0 38 40">
          <circle cx="19" cy="19" r="18" fill={paper} stroke={green} strokeDasharray="1 2" />
          <path d="M8 14Q7 25 14 28H24Q31 24 30 14Z" fill={paper} stroke={green} />
          <path d="M10 16H28M11 19H27M12 22H26M14 25H24" stroke={red} strokeDasharray="1 2" />
          <path d="M7 18V11Q9 3 19 2Q29 3 31 11V18L28 13H10Z" fill={red} />
          <path d="M11 7H28M9 10H30M13 4H25" stroke={ink} strokeDasharray="1 1" />
          <path d="M7 12V18M30 12V19M12 27L19 31L27 27" stroke={ink} strokeWidth="1.500" fill="none" />
          <path d="M5 34Q6 27 12 28L18 33L25 28Q32 29 33 35Q20 41 5 36Z" fill={green} />
          <path d="M16 34L24 38H14ZM6 32L10 36" fill={ink} stroke={ink} />
          <path d="M14 31L18 35L24 31" fill="none" stroke={paper} strokeWidth="2" />
        </svg>
      </Avatar>

      <NetWidget>
        <NetBall>
          <svg width="38" height="40" viewBox="0 0 38 40">
            <circle cx="19" cy="20" r="18.500" fill={paper} />
            <circle cx="19" cy="20" r="17" fill={green} stroke={ink} strokeWidth="1.300" />
            <path d="M3 18Q5 4 19 4T35 18Z" fill={ink} />
            <path d="M7 10H31M5 14H33M11 7H27" stroke={green} strokeDasharray="1 2" />
            <path d="M10 16H14M16 17H21M24 16H29" stroke={paper} strokeDasharray="2 1" />
          </svg>
        </NetBall>
        <NetPill>
          <svg width="5" height="20" viewBox="0 0 5 20"><path d="M0 4L2.500 1L5 4H3V7H2V4Z" fill={red} /><path d="M2 12H3V15H5L2.500 19L0 15H2Z" fill={mid} /></svg>
          <NetText>0.06K/s<br />0K/s</NetText>
          <svg width="15" height="16" viewBox="0 0 15 16"><circle cx="7" cy="9" r="6.500" fill={green} /><path d="M4 9H10M7 6V12" stroke={paper} strokeWidth="1.500" /><circle cx="12" cy="3.500" r="3" fill={red} /></svg>
        </NetPill>
      </NetWidget>

      <Watermark>
        激活 Windows
        <WatermarkSmall>转到“设置”以激活 Windows。</WatermarkSmall>
      </Watermark>

      <Cursor>
        <svg width="12" height="18" viewBox="0 0 12 18" fill={paper}><path d="M1.500 1V14L4.500 11.500H10L1.500 1" stroke={green} /><path d="M1.500 1V14" stroke={ink} /></svg>
      </Cursor>
    </Screen>
  );
}
